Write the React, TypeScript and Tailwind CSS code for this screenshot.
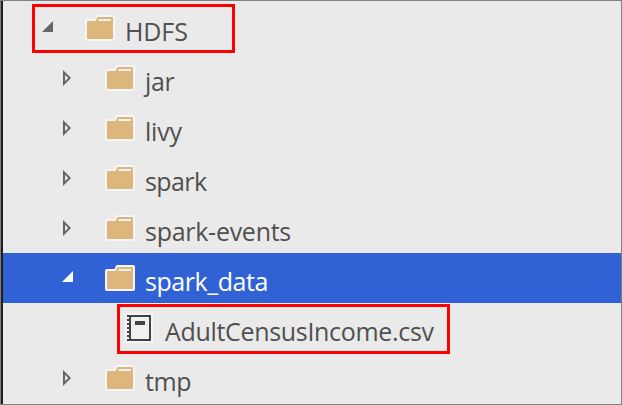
import { clsx } from "clsx";

type Item = {
  label: string;
  kind: "folder" | "file";
  state?: "open" | "closed";
  indent: string;
  text: string;
  selected?: boolean;
  mark?: string;
};

const items: Item[] = [
  { label: "HDFS", kind: "folder", state: "open", indent: "pl-[37px]", text: "tracking-[-0.1px]", mark: "left-[29px] top-px w-[203px] h-[49px]" },
  { label: "jar", kind: "folder", state: "closed", indent: "pl-[57px]", text: "tracking-[-0.3px]" },
  { label: "livy", kind: "folder", state: "closed", indent: "pl-[57px]", text: "tracking-[-0.2px]" },
  { label: "spark", kind: "folder", state: "closed", indent: "pl-[57px]", text: "tracking-[-0.6px]" },
  { label: "spark-events", kind: "folder", state: "closed", indent: "pl-[57px]", text: "tracking-[-0.27px]" },
  { label: "spark_data", kind: "folder", state: "open", indent: "pl-[57px]", text: "tracking-[-0.45px]", selected: true },
  { label: "AdultCensusIncome.csv", kind: "file", indent: "pl-[77px]", text: "tracking-[-0.32px]", mark: "left-[114px] top-px w-[333px] h-[50px]" },
  { label: "tmp", kind: "folder", state: "closed", indent: "pl-[57px]", text: "tracking-[-0.4px]" },
];

function Arrow({ state, selected }: { state?: "open" | "closed"; selected?: boolean }) {
  return (
    <svg className="h-[50px] w-[45px] shrink-0" viewBox="0 0 45 50">
      {state === "open" && <path d="M13 18V29H2Z" fill={selected ? "#fff" : "#666"} />}
      {state === "closed" && (
        <path d="M3 17L11 25L3 33ZM5 21.7V28.3L8.3 25Z" fill="#646464" fillRule="evenodd" />
      )}
    </svg>
  );
}

function FolderIcon() {
  return (
    <svg className="h-[50px] w-[30px] shrink-0" viewBox="0 0 30 50">
      <path d="M2 16H9.5L11.5 12H28Q30 12 30 14V36Q30 38 28 38H2Q0 38 0 36V18Q0 16 2 16Z" fill="#f6f6f6" />
      <path d="M2.5 18H10.5L12.5 14H27.5Q28 14 28 14.5V35.5Q28 36 27.5 36H2.5Q2 36 2 35.5V18.5Q2 18 2.5 18Z" fill="#dcb67a" />
      <path d="M13.7 16H26V18H13Z" fill="#f0eff1" />
    </svg>
  );
}

function FileIcon() {
  return (
    <svg className="h-[50px] w-[30px] shrink-0" viewBox="0 0 30 50">
      <path d="M0 10H28V40H0Z" fill="#f6f6f6" />
      <path d="M5 13H25V37H5Z" fill="#f0eff1" stroke="#424242" strokeWidth="2" />
      <path d="M2 13H5M2 17H5M2 21H5M2 25H5M2 29H5M2 33H5M2 37H5" stroke="#424242" strokeWidth="2" />
      <path d="M10 18H20V22H10Z" fill="#424242" />
    </svg>
  );
}

export default function App() {
  return (
    <div className="h-[405px] w-[622px] overflow-hidden border border-[#808080] bg-[#eaeaea]">
      <div className="h-full border-l-2 border-[#1e1e1e] pt-[2px]">
        {items.map((item) => (
          <div
            key={item.label}
            className={clsx(
              "relative flex h-[50px] items-start",
              item.indent,
              item.selected ? "bg-[#3062d6] text-white" : "text-[#505050]",
            )}
          >
            <Arrow state={item.state} selected={item.selected} />
            {item.kind === "folder" ? <FolderIcon /> : <FileIcon />}
            <span
              className={clsx(
                "ml-[10px] pt-[3px] font-['Open_Sans','Noto_Sans',sans-serif] text-[25px] leading-[50px] whitespace-nowrap",
                item.text,
              )}
            >
              {item.label}
            </span>
            {item.mark && <div className={clsx("absolute z-10 border-[3px] border-[#ff0000]", item.mark)} />}
          </div>
        ))}
      </div>
    </div>
  );
}
